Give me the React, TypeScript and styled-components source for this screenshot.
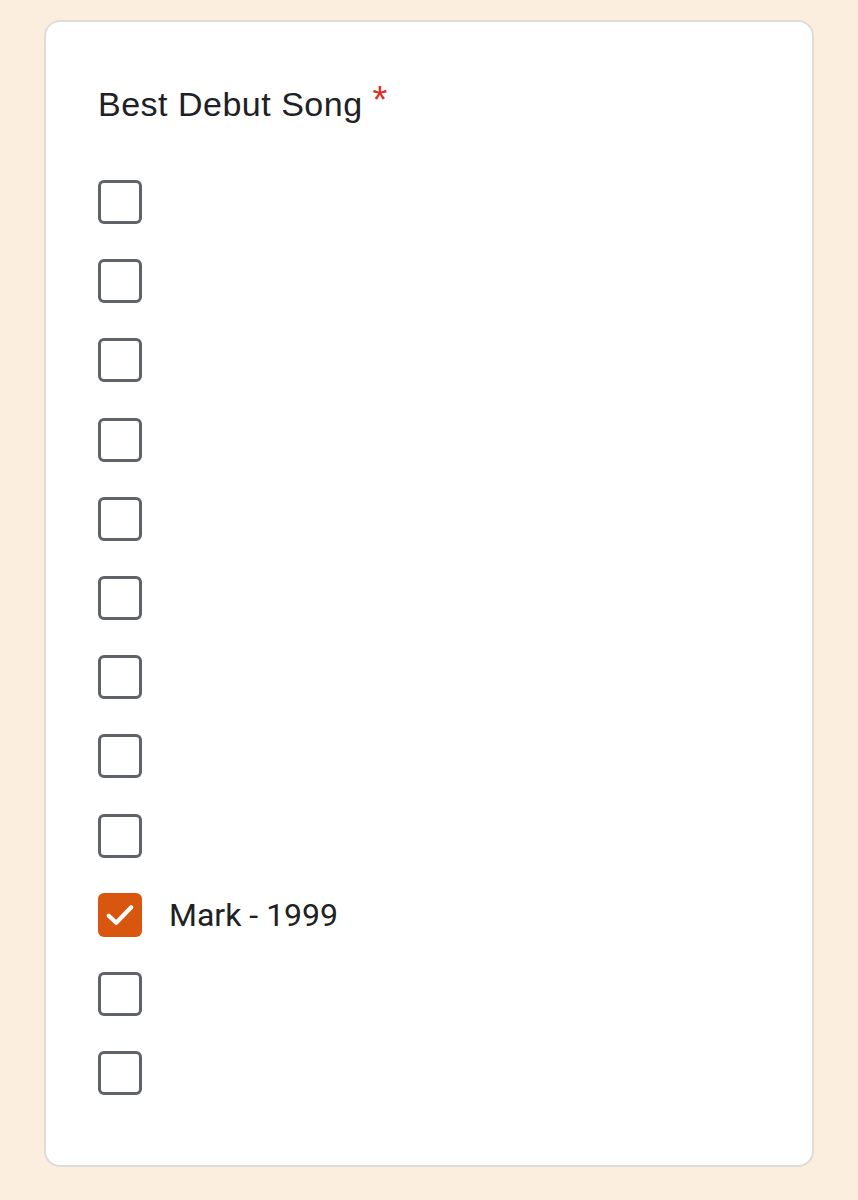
import React from "react";
import styled, { createGlobalStyle } from "styled-components";

const Global = createGlobalStyle`
  html, body { margin: 0; padding: 0; background: #fbeedf; }
  body { width: 858px; height: 1200px; overflow: hidden; }
`;

const Page = styled.div`
  padding: 20px 44px 0 44px;
  box-sizing: border-box;
  width: 858px;
`;

const Card = styled.div`
  background: #ffffff;
  border: 2px solid #dedcda;
  border-radius: 16px;
  box-sizing: border-box;
  height: 1147px;
  padding: 65px 52px 0 52px;
`;

const Title = styled.div`
  font-family: "Liberation Sans", Arial, sans-serif;
  font-size: 34px;
  letter-spacing: 0.5px;
  line-height: 1;
  color: #202124;
  display: flex;
  align-items: flex-start;
  gap: 10px;
`;

const Star = styled.span`
  color: #d93025;
  font-size: 38px;
  line-height: 1;
  margin-top: -6px;
`;

const List = styled.div`
  margin-top: 59px;
  display: flex;
  flex-direction: column;
  gap: 35.2px;
`;

const Row = styled.label`
  display: flex;
  align-items: center;
  gap: 27px;
  height: 44px;
`;

const Box = styled.span<{ $checked?: boolean }>`
  width: 44px;
  height: 44px;
  box-sizing: border-box;
  border-radius: 6px;
  border: ${(p) => (p.$checked ? "none" : "3.8px solid #5f6368")};
  background: ${(p) => (p.$checked ? "#d9560e" : "transparent")};
  display: flex;
  align-items: center;
  justify-content: center;
  flex-shrink: 0;
`;

const Label = styled.span`
  font-family: Roboto, "Liberation Sans", sans-serif;
  font-size: 32px;
  color: #202124;
  line-height: 1;
`;

const items: { label?: string; checked?: boolean }[] = [
  {}, {}, {}, {}, {}, {}, {}, {}, {},
  { label: "Mark - 1999", checked: true },
  {}, {},
];

export default function App() {
  return (
    <>
      <Global />
      <Page>
        <Card>
          <Title>
            Best Debut Song <Star>*</Star>
          </Title>
          <List>
            {items.map((it, i) => (
              <Row key={i}>
                <Box $checked={it.checked}>
                  {it.checked && (
                    <svg width="36" height="36" viewBox="0 0 24 24">
                      <path
                        d="M4.5 12.5 L9.5 17.2 L19.5 6.8"
                        fill="none"
                        stroke="#fff"
                        strokeWidth="2.8"
                        strokeLinecap="round"
                        strokeLinejoin="round"
                      />
                    </svg>
                  )}
                </Box>
                {it.label && <Label>{it.label}</Label>}
              </Row>
            ))}
          </List>
        </Card>
      </Page>
    </>
  );
}
